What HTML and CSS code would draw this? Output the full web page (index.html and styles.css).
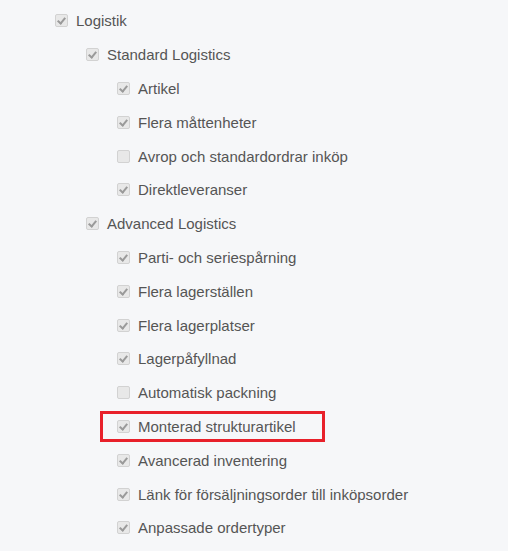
FILE: index.html
```html
<!DOCTYPE html>
<html lang="sv">
<head>
    <meta charset="UTF-8">
    <title>Moduler</title>
    <link rel="stylesheet" href="styles.css">
</head>
<body>
    <ul class="tree">
        <li class="row lvl0"><span class="cb on"></span>Logistik</li>
        <li class="row lvl1"><span class="cb on"></span>Standard Logistics</li>
        <li class="row lvl2"><span class="cb on"></span>Artikel</li>
        <li class="row lvl2"><span class="cb on"></span>Flera måttenheter</li>
        <li class="row lvl2"><span class="cb"></span>Avrop och standardordrar inköp</li>
        <li class="row lvl2"><span class="cb on"></span>Direktleveranser</li>
        <li class="row lvl1"><span class="cb on"></span>Advanced Logistics</li>
        <li class="row lvl2"><span class="cb on"></span>Parti- och seriespårning</li>
        <li class="row lvl2"><span class="cb on"></span>Flera lagerställen</li>
        <li class="row lvl2"><span class="cb on"></span>Flera lagerplatser</li>
        <li class="row lvl2"><span class="cb on"></span>Lagerpåfyllnad</li>
        <li class="row lvl2"><span class="cb"></span>Automatisk packning</li>
        <li class="row lvl2"><span class="marked"><span class="cb on"></span>Monterad strukturartikel</span></li>
        <li class="row lvl2"><span class="cb on"></span>Avancerad inventering</li>
        <li class="row lvl2"><span class="cb on"></span>Länk för försäljningsorder till inköpsorder</li>
        <li class="row lvl2"><span class="cb on"></span>Anpassade ordertyper</li>
    </ul>
</body>
</html>
```
FILE: styles.css
```css
/* Modulträd */
body { margin: 0; background-color: #f6f7f9; font-family: "Liberation Sans", Arial, sans-serif; font-size: 15px; color: #555; }
.tree { list-style: none; margin: 0; padding: 4px 0 0 0; }
.row { display: flex; align-items: center; height: 33.8px; white-space: nowrap; }
.lvl0 { padding-left: 55px; }
.lvl1 { padding-left: 86px; }
.lvl2 { padding-left: 117px; }
.cb { width: 13px; height: 13px; box-sizing: border-box; border: 1px solid #d2d2d2; border-radius: 2px; background-color: #e8e8e8; margin-right: 8px; flex-shrink: 0; position: relative; }
.cb.on::after { content: ""; position: absolute; left: 3px; top: 1px; width: 3px; height: 6px; border: solid #9a9a9a; border-width: 0 2px 2px 0; transform: rotate(40deg); }
.marked { display: flex; align-items: center; border: 3px solid #e8202a; margin-left: -17px; padding: 0 0 0 14px; width: 225px; height: 31px; box-sizing: border-box; }
```
